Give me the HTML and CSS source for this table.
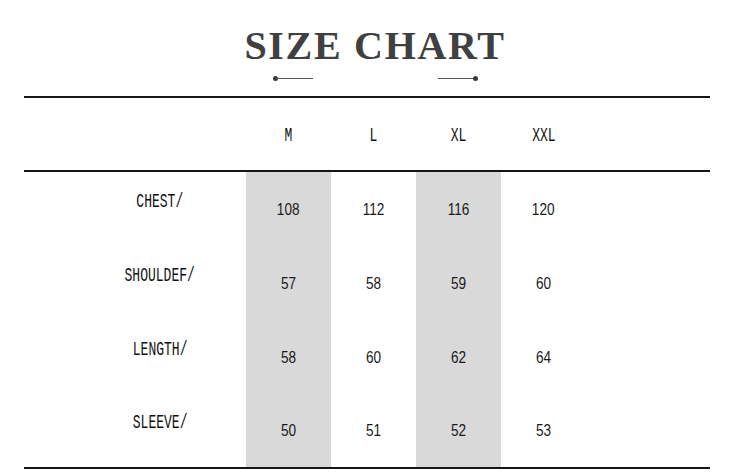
FILE: index.html
```html
<!DOCTYPE html>
<html>
<head>
<meta charset="utf-8">
<link rel="stylesheet" href="styles.css">
</head>
<body>
<div class="page">
  <h1 class="title">SIZE CHART</h1>
  <div class="ornaments">
    <span class="orn orn-left"><i class="dot"></i><i class="bar"></i></span>
    <span class="orn orn-right"><i class="bar"></i><i class="dot"></i></span>
  </div>
  <div class="chart">
    <div class="head">
      <div class="cell"></div>
      <div class="cell"><span class="cond">M</span></div>
      <div class="cell"><span class="cond">L</span></div>
      <div class="cell"><span class="cond">XL</span></div>
      <div class="cell"><span class="cond">XXL</span></div>
      <div class="cell"></div>
    </div>
    <div class="body">
      <div class="cell label"><span class="cond">CHEST/</span></div>
      <div class="cell shade"><span class="num">108</span></div>
      <div class="cell"><span class="num">112</span></div>
      <div class="cell shade"><span class="num">116</span></div>
      <div class="cell"><span class="num">120</span></div>
      <div class="cell"></div>

      <div class="cell label"><span class="cond">SHOULDEF/</span></div>
      <div class="cell shade"><span class="num">57</span></div>
      <div class="cell"><span class="num">58</span></div>
      <div class="cell shade"><span class="num">59</span></div>
      <div class="cell"><span class="num">60</span></div>
      <div class="cell"></div>

      <div class="cell label"><span class="cond">LENGTH/</span></div>
      <div class="cell shade"><span class="num">58</span></div>
      <div class="cell"><span class="num">60</span></div>
      <div class="cell shade"><span class="num">62</span></div>
      <div class="cell"><span class="num">64</span></div>
      <div class="cell"></div>

      <div class="cell label"><span class="cond">SLEEVE/</span></div>
      <div class="cell shade"><span class="num">50</span></div>
      <div class="cell"><span class="num">51</span></div>
      <div class="cell shade"><span class="num">52</span></div>
      <div class="cell"><span class="num">53</span></div>
      <div class="cell"></div>
    </div>
  </div>
</div>
</body>
</html>
```

FILE: styles.css
```css
html, body {
  margin: 0;
  padding: 0;
  background: #ffffff;
}
.page {
  width: 750px;
  height: 473px;
  overflow: hidden;
  padding-top: 26px;
  box-sizing: border-box;
}
.title {
  margin: 0;
  text-align: center;
  font-family: "Liberation Serif", serif;
  font-weight: bold;
  font-size: 40px;
  line-height: 40px;
  letter-spacing: 1.7px;
  color: #404040;
}
.ornaments {
  display: flex;
  justify-content: center;
  gap: 125px;
  margin-top: 10px;
  height: 5px;
}
.orn {
  display: flex;
  align-items: center;
  width: 40px;
}
.orn i { display: block; }
.dot {
  width: 5px;
  height: 5px;
  border-radius: 50%;
  background: #3a3a3a;
  flex: none;
}
.bar {
  flex: 1;
  height: 1.5px;
  background: #555;
}
.orn-left .dot { margin-right: -2px; }
.orn-right .dot { margin-left: -2px; }
.chart {
  margin: 15px 0 0 24px;
  width: 686px;
  border-top: 2px solid #161616;
}
.head, .body {
  display: grid;
  grid-template-columns: 222px 85px 85px 85px 85px 1fr;
}
.head {
  height: 72px;
  border-bottom: 2px solid #161616;
}
.head .cell {
  padding-top: 3px;
}
.body {
  grid-template-rows: 74px 74px 74px 73px;
  border-bottom: 2px solid #161616;
}
.cell {
  display: flex;
  align-items: center;
  justify-content: center;
}
.cond {
  display: inline-block;
  font-family: "Liberation Mono", monospace;
  font-size: 21px;
  line-height: 21px;
  color: #111;
  transform: scaleX(0.62);
  white-space: nowrap;
}
.label {
  padding-left: 50px;
  padding-bottom: 16px;
}
.num {
  display: inline-block;
  font-family: "Liberation Sans", sans-serif;
  font-size: 17px;
  line-height: 17px;
  color: #1a1a1a;
  transform: scaleX(0.8);
}
.shade {
  background: #d9d9d9;
}
```
